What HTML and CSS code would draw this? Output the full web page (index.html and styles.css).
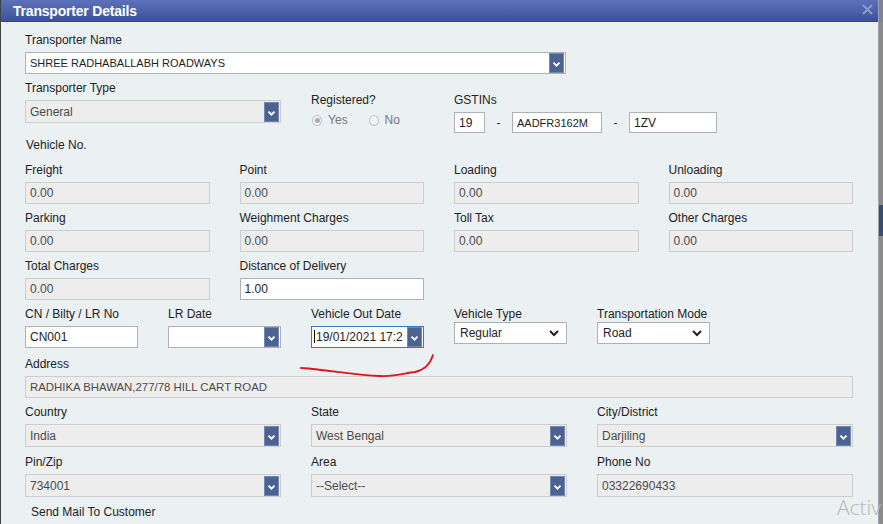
FILE: index.html
```html
<!DOCTYPE html>
<html>
<head>
<meta charset="utf-8">
<link rel="stylesheet" href="styles.css">
</head>
<body>
<div class="screen">
  <div class="dialog">
    <div class="titlebar">
      <span class="title">Transporter Details</span>
      <svg class="close" width="11" height="11" viewBox="0 0 11 11"><path d="M1 1 L10 10 M10 1 L1 10" stroke="#8d9cc8" stroke-width="2"/></svg>
    </div>
    <div class="form">
      <div class="row r6">
        <div class="field span4">
          <label>Transporter Name</label>
          <div class="box white sel"><span class="val caps11">SHREE RADHABALLABH ROADWAYS</span><span class="dd"><svg viewBox="0 0 15 20" width="15" height="20"><path d="M4 8.5 L7.5 12 L11 8.5" fill="none" stroke="#fff" stroke-width="2.2"/></svg></span></div>
        </div>
      </div>
      <div class="row r6 row2">
        <div class="field span2">
          <label>Transporter Type</label>
          <div class="box dis sel h23"><span class="val">General</span><span class="dd"><svg viewBox="0 0 15 20" width="15" height="20"><path d="M4 8.5 L7.5 12 L11 8.5" fill="none" stroke="#fff" stroke-width="2.2"/></svg></span></div>
        </div>
        <div class="field offset">
          <label>Registered?</label>
          <div class="radios">
            <span class="radio on"></span><span class="rlabel">Yes</span>
            <span class="radio"></span><span class="rlabel">No</span>
          </div>
        </div>
        <div class="field span3 offset">
          <label>GSTINs</label>
          <div class="gstin">
            <div class="box white g1"><span class="val">19</span></div>
            <span class="dash">-</span>
            <div class="box white g2"><span class="val caps11">AADFR3162M</span></div>
            <span class="dash">-</span>
            <div class="box white g3"><span class="val">1ZV</span></div>
          </div>
        </div>
      </div>
      <label class="solo">Vehicle No.</label>
      <div class="row r4">
        <div class="field"><label>Freight</label><div class="box dis"><span class="val">0.00</span></div></div>
        <div class="field"><label>Point</label><div class="box dis"><span class="val">0.00</span></div></div>
        <div class="field"><label>Loading</label><div class="box dis"><span class="val">0.00</span></div></div>
        <div class="field"><label>Unloading</label><div class="box dis"><span class="val">0.00</span></div></div>
      </div>
      <div class="row r4">
        <div class="field"><label>Parking</label><div class="box dis"><span class="val">0.00</span></div></div>
        <div class="field"><label>Weighment Charges</label><div class="box dis"><span class="val">0.00</span></div></div>
        <div class="field"><label>Toll Tax</label><div class="box dis"><span class="val">0.00</span></div></div>
        <div class="field"><label>Other Charges</label><div class="box dis"><span class="val">0.00</span></div></div>
      </div>
      <div class="row r4">
        <div class="field"><label>Total Charges</label><div class="box dis"><span class="val">0.00</span></div></div>
        <div class="field"><label>Distance of Delivery</label><div class="box white"><span class="val dark">1.00</span></div></div>
      </div>
      <div class="row r6 cnrow">
        <div class="field"><label>CN / Bilty / LR No</label><div class="box white"><span class="val dark">CN001</span></div></div>
        <div class="field"><label>LR Date</label><div class="box white sel"><span class="val"></span><span class="dd"><svg viewBox="0 0 15 20" width="15" height="20"><path d="M4 8.5 L7.5 12 L11 8.5" fill="none" stroke="#fff" stroke-width="2.2"/></svg></span></div></div>
        <div class="field"><label>Vehicle Out Date</label><div class="box white sel focus"><span class="val dark clip"><span class="caret"></span>19/01/2021 17:2</span><span class="dd"><svg viewBox="0 0 15 20" width="15" height="20"><path d="M4 8.5 L7.5 12 L11 8.5" fill="none" stroke="#fff" stroke-width="2.2"/></svg></span></div></div>
        <div class="field up"><label>Vehicle Type</label><div class="box white native"><span class="val dark">Regular</span><svg class="chev" viewBox="0 0 12 8" width="12" height="8"><path d="M2 2 L6 6 L10 2" fill="none" stroke="#222" stroke-width="2"/></svg></div></div>
        <div class="field up"><label>Transportation Mode</label><div class="box white native"><span class="val dark">Road</span><svg class="chev" viewBox="0 0 12 8" width="12" height="8"><path d="M2 2 L6 6 L10 2" fill="none" stroke="#222" stroke-width="2"/></svg></div></div>
      </div>
      <div class="row addr">
        <div class="field"><label>Address</label><div class="box dis"><span class="val caps114">RADHIKA BHAWAN,277/78 HILL CART ROAD</span></div></div>
      </div>
      <div class="row r3">
        <div class="field"><label>Country</label><div class="box dis sel h23"><span class="val">India</span><span class="dd"><svg viewBox="0 0 15 20" width="15" height="20"><path d="M4 8.5 L7.5 12 L11 8.5" fill="none" stroke="#fff" stroke-width="2.2"/></svg></span></div></div>
        <div class="field"><label>State</label><div class="box dis sel h23"><span class="val">West Bengal</span><span class="dd"><svg viewBox="0 0 15 20" width="15" height="20"><path d="M4 8.5 L7.5 12 L11 8.5" fill="none" stroke="#fff" stroke-width="2.2"/></svg></span></div></div>
        <div class="field"><label>City/District</label><div class="box dis sel h23"><span class="val">Darjiling</span><span class="dd"><svg viewBox="0 0 15 20" width="15" height="20"><path d="M4 8.5 L7.5 12 L11 8.5" fill="none" stroke="#fff" stroke-width="2.2"/></svg></span></div></div>
      </div>
      <div class="row r3">
        <div class="field"><label>Pin/Zip</label><div class="box dis sel h23"><span class="val">734001</span><span class="dd"><svg viewBox="0 0 15 20" width="15" height="20"><path d="M4 8.5 L7.5 12 L11 8.5" fill="none" stroke="#fff" stroke-width="2.2"/></svg></span></div></div>
        <div class="field"><label>Area</label><div class="box dis sel h23"><span class="val">--Select--</span><span class="dd"><svg viewBox="0 0 15 20" width="15" height="20"><path d="M4 8.5 L7.5 12 L11 8.5" fill="none" stroke="#fff" stroke-width="2.2"/></svg></span></div></div>
        <div class="field"><label>Phone No</label><div class="box dis h23"><span class="val">03322690433</span></div></div>
      </div>
      <label class="solo mail">Send Mail To Customer</label>
    </div>
    <svg class="scribble" width="150" height="30" viewBox="0 0 150 30"><path d="M1 15 C 30 17, 55 22, 80 23 C 95 24, 105 20, 115 19 C 124 17, 130 12, 133 2" fill="none" stroke="#e3141b" stroke-width="1.8" stroke-linecap="round"/></svg>
  </div>
  <div class="outside"></div>
  <span class="watermark">Activ</span>
</div>
</body>
</html>
```

FILE: styles.css
```css
* { box-sizing: border-box; }
html, body { margin: 0; padding: 0; }
body {
  width: 883px;
  height: 524px;
  overflow: hidden;
  font-family: "Liberation Sans", Arial, sans-serif;
  font-size: 12px;
  color: #222;
  background: #808080;
}
.screen {
  position: relative;
  display: flex;
  width: 883px;
  height: 524px;
}
.dialog {
  position: relative;
  width: 879px;
  height: 524px;
  background: #ebf0f3;
  border-left: 1px solid #3f4448;
  border-right: 1px solid #9aa3ad;
  overflow: hidden;
}
.outside {
  flex: 1;
  background: linear-gradient(#7d8394 0, #7d8394 22px, #8a8a8a 22px, #8a8a8a 205px, #3e4c6c 205px, #3e4c6c 236px, #8c8c8c 236px);
}
.titlebar {
  height: 22px;
  background: linear-gradient(#5c71ba, #4a5fa8 60%, #3c5096);
  border-bottom: 1px solid #33478c;
  display: flex;
  align-items: center;
  justify-content: space-between;
  padding: 0 5px 0 12px;
}
.title {
  color: #fff;
  font-weight: bold;
  font-size: 14px;
  letter-spacing: -0.2px;
}
.close { display: block; margin-top: -2px; }
.form {
  padding: 10px 0 0 24px;
  width: 852px;
}
.row {
  display: grid;
  column-gap: 30px;
  margin-bottom: 6px;
}
.row2 { margin-bottom: 4px; }
.r6 { grid-template-columns: repeat(6, minmax(0, 1fr)); }
.r4 { grid-template-columns: repeat(4, minmax(0, 1fr)); }
.r3 { grid-template-columns: repeat(3, minmax(0, 1fr)); margin-bottom: 7px; }
.addr { grid-template-columns: minmax(0, 1fr); margin-top: 8px; }
.span4 { grid-column: span 4; }
.span4 .box { width: 541px; }
.span2 { grid-column: span 2; }
.span3 { grid-column: span 3; }
.field {
  display: flex;
  flex-direction: column;
  min-width: 0;
}
label {
  display: block;
  height: 16px;
  line-height: 16px;
  margin-bottom: 4px;
  white-space: nowrap;
  color: #222;
}
.solo { margin-bottom: 9px; margin-left: 1px; }
.mail { margin-left: 6px; }
.offset { margin-top: 12px; }
.box {
  height: 22px;
  border: 1px solid #c9cacb;
  display: flex;
  align-items: center;
  overflow: hidden;
}
.h23 { height: 23px; }
.box.white { background: #fff; border-color: #aeb0b4; }
.box.dis { background: #eeeded; border-color: #cdcdcd; }
.val {
  flex: 1;
  min-width: 0;
  padding-left: 4px;
  white-space: nowrap;
  overflow: hidden;
  color: #4a4a4a;
}
.caps11 { font-size: 11px; }
.caps114 { font-size: 11.4px; }
.val.dark { color: #1e1e1e; }
.white .val { color: #1e1e1e; }
.dd {
  width: 15px;
  height: 20px;
  margin-right: 1px;
  background: #4c6293;
  border: 1px solid #7486b0;
  display: flex;
  flex: none;
}
.dd svg { display: block; }
.focus { border-color: #3a76c0 !important; }
.clip { padding-left: 2px; margin-right: 1px; }
.caret {
  display: inline-block;
  width: 1px;
  height: 13px;
  background: #000;
  vertical-align: -2px;
  margin-right: 1px;
}
.up label { margin-bottom: 0; }
.native { border-color: #a3a3a3; padding-right: 6px; }
.native .val { padding-left: 5px; }
.chev { flex: none; }
.radios {
  display: flex;
  align-items: center;
  height: 18px;
  margin-top: -1px;
}
.radio {
  width: 11px;
  height: 11px;
  border-radius: 50%;
  border: 1px solid #c2c4c7;
  background: #f1f2f3;
  margin-left: 1px;
  display: flex;
  align-items: center;
  justify-content: center;
}
.radio.on::after {
  content: "";
  width: 5px;
  height: 5px;
  border-radius: 50%;
  background: #a9abad;
}
.rlabel { color: #777; margin-left: 6px; width: 44px; }
.gstin {
  display: flex;
  align-items: center;
}
.gstin .box { height: 21px; }
.g1 { width: 31px; }
.g2 { width: 90px; }
.g3 { width: 88px; }
.dash {
  width: 27px;
  text-align: center;
  color: #333;
}
.scribble {
  position: absolute;
  left: 299px;
  top: 353px;
}
.watermark {
  position: absolute;
  left: 837px;
  top: 493px;
  font-family: "Open Sans", "Liberation Sans", sans-serif;
  font-size: 21px;
  font-weight: 300;
  color: #b4b8bc;
  white-space: nowrap;
}
```
